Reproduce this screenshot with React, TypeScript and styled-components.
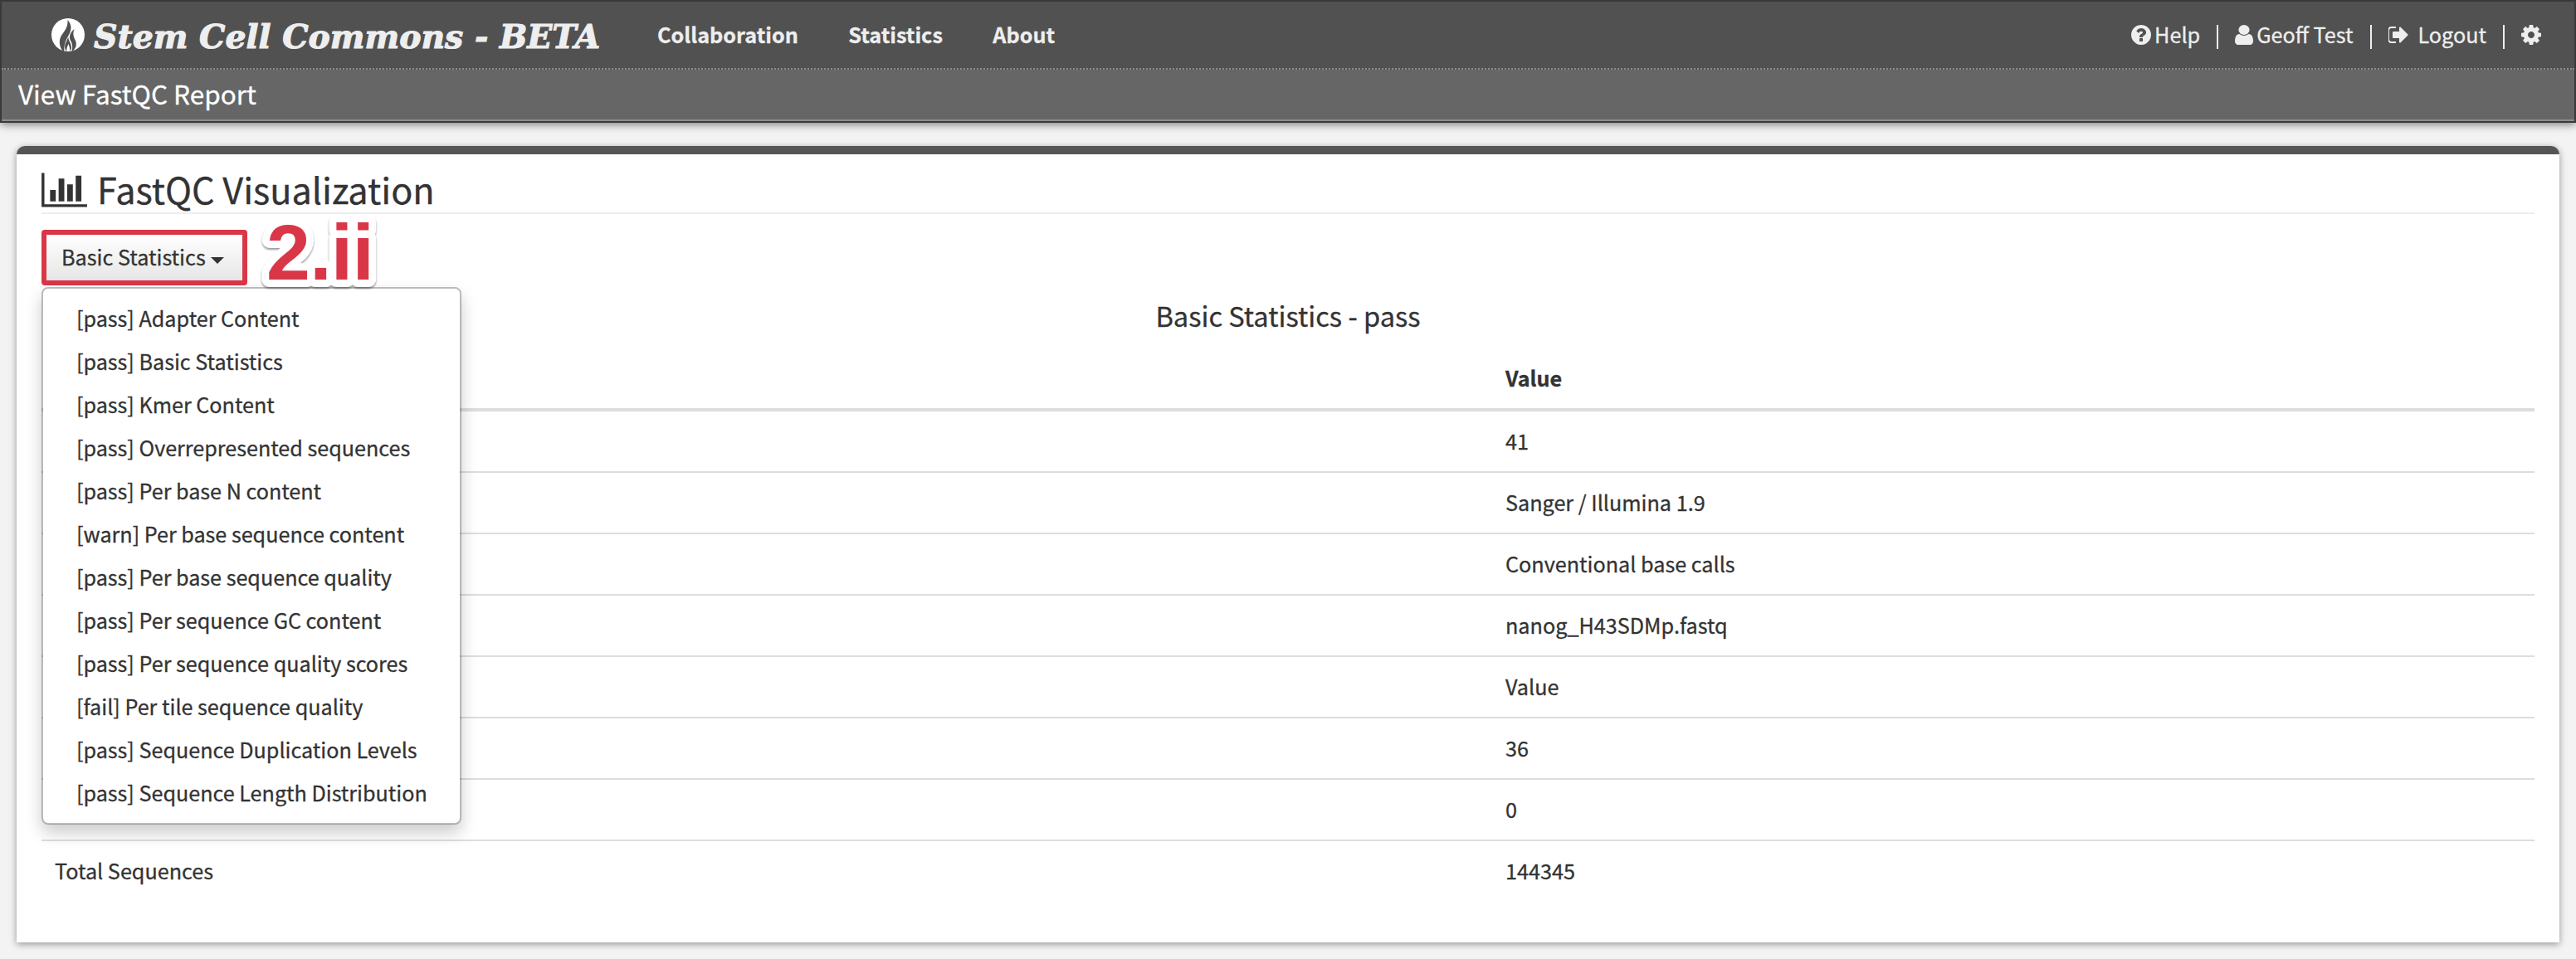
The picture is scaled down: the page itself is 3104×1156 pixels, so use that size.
import React from "react";
import styled, { createGlobalStyle } from "styled-components";

const GlobalStyle = createGlobalStyle`
  *, *::before, *::after { box-sizing: border-box; }
  body {
    margin: 0;
    background: #f3f3f3;
    color: #333;
    font-family: "Noto Sans CJK SC", "Noto Sans", sans-serif;
    font-size: 25.2px;
    line-height: 40px;
    -webkit-text-stroke: 0.3px;
  }
`;

const Page = styled.div`
  width: 3104px;
  height: 1156px;
  overflow: hidden;
`;

const Header = styled.header`
  height: 148px;
  border: 2px solid #393939;
  background: #666;
  box-shadow: 0 2px 10px rgba(0, 0, 0, 0.5);
`;

const NavBar = styled.nav`
  display: flex;
  align-items: center;
  height: 82px;
  padding: 0 40px 0 60px;
  background: #515151;
  border-bottom: 2px dotted #8c8c8c;
  color: #eee;
`;

const Brand = styled.a`
  display: flex;
  align-items: center;
  width: 730px;
`;

const BrandName = styled.span`
  margin-left: 11px;
  padding-top: 4px;
  font: italic bold 39.4px/40px "DejaVu Serif", serif;
  white-space: nowrap;
  -webkit-text-stroke: 1.1px #eee;
`;

const NavLinks = styled.div`
  display: flex;
  gap: 60.5px;
  flex: 1;
  padding-bottom: 2px;
  font-size: 25.2px;
  font-weight: 700;
`;

const UserLinks = styled.div`
  display: flex;
  align-items: center;
`;

const UserLink = styled.a<{ $gap?: number }>`
  display: flex;
  align-items: center;
  gap: ${(p) => p.$gap ?? 4}px;
`;

const LinkText = styled.span`
  padding-bottom: 2px;
`;

const Separator = styled.span`
  width: 2px;
  height: 29px;
  margin: 5px 20px 0;
  background: #eee;
`;

const TitleBar = styled.div`
  height: 62px;
  padding: 6px 20px 0;
  border-bottom: 2px solid #8c8c8c;
  color: #fff;
  font-size: 31.5px;
  line-height: 44px;
`;

const Card = styled.main`
  height: 960px;
  margin: 28px 20px 0;
  padding: 18px 30px 0;
  border-top: 10px solid #555;
  border-radius: 10px 10px 0 0;
  background: #fff;
  box-shadow: 0 2px 8px rgba(0, 0, 0, 0.4);
`;

const Heading = styled.h1`
  display: flex;
  height: 54px;
  margin: 0;
  border-bottom: 2px solid #eee;
  font-size: 43.2px;
  font-weight: 400;
  line-height: 47px;
  gap: 12px;
`;

const ChartIcon = styled.svg`
  margin-top: 1px;
`;

const Toolbar = styled.div`
  display: flex;
  position: relative;
  height: 86px;
  padding-top: 19px;
`;

const DropdownButton = styled.button`
  display: flex;
  align-items: center;
  gap: 6px;
  width: 248px;
  height: 67px;
  padding: 0 0 3px 18px;
  border: 6px solid #d93747;
  border-radius: 4px;
  background: linear-gradient(#fff, #e6e6e6);
  color: #333;
  font: inherit;
`;

const Caret = styled.span`
  margin-top: 9px;
  border: 8px solid transparent;
  border-top-color: #333;
  border-bottom: 0;
`;

const Menu = styled.ul`
  position: absolute;
  top: 88px;
  left: 0;
  width: 506px;
  height: 648px;
  margin: 0;
  padding: 9px 0;
  list-style: none;
  background: #fff;
  background-clip: padding-box;
  border: 2px solid rgba(0, 0, 0, 0.25);
  border-radius: 8px;
  box-shadow: 0 10px 20px rgba(0, 0, 0, 0.2);
  font-size: 25.15px;
`;

const MenuItem = styled.li`
  padding: 6px 40px;
  white-space: nowrap;
`;

const Callout = styled.svg`
  position: absolute;
  top: 0;
  left: 250px;
  z-index: 1;
  overflow: visible;
  filter: drop-shadow(0 2px 1px rgba(0, 0, 0, 0.4));
`;

const CalloutText = styled.text`
  font: bold 95px "Liberation Sans", sans-serif;
  letter-spacing: -0.7px;
  fill: #d93747;
  stroke: #fff;
  stroke-width: 18px;
  stroke-linejoin: round;
  paint-order: stroke;
  -webkit-text-stroke: 18px #fff;
`;

const SectionTitle = styled.h2`
  margin: 0;
  height: 76px;
  padding-top: 14px;
  font-size: 32.6px;
  font-weight: 400;
  line-height: 44px;
  text-align: center;
`;

const Table = styled.div`
  display: flex;
  flex-direction: column;
`;

const Row = styled.div<{ $head?: boolean }>`
  display: grid;
  grid-template-columns: 1748px 1fr;
  height: ${(p) => (p.$head ? 76 : 74)}px;
  padding-top: 15px;
  border-bottom: ${(p) => (p.$head ? "4px" : "2px")} solid #ddd;
  font-weight: ${(p) => (p.$head ? 700 : 400)};
  &:last-child { border-bottom: 0; }
`;

const Cell = styled.div`
  padding: 0 16px;
`;

const Glyph = ({ d, x = 128, span = 1536, width = 24 }: { d: string; x?: number; span?: number; width?: number }) => (
  <svg width={width} height="28" viewBox={`${x} 0 ${span} 1792`} preserveAspectRatio="none" fill="#eee">
    <path d={d} />
  </svg>
);

const HELP =
  "M1024 1376v-192q0-14-9-23t-23-9h-192q-14 0-23 9t-9 23v192q0 14 9 23t23 9h192q14 0 23-9t9-23zm256-672q0-88-55.5-163t-138.5-116-170-41q-243 0-371 213-15 24 8 42l132 100q7 6 19 6 16 0 25-12 53-68 86-92 34-24 86-24 48 0 85.5 26t37.5 59q0 38-20 61t-68 45q-63 28-115.5 86.5t-52.5 125.5v36q0 14 9 23t23 9h192q14 0 23-9t9-23q0-19 21.5-49.5t54.5-49.5q32-18 49-28.5t46-35 44.5-48 28-60.5 12.5-81zm384 192q0 209-103 385.5t-279.5 279.5-385.5 103-385.5-103-279.5-279.5-103-385.5 103-385.5 279.5-279.5 385.5-103 385.5 103 279.5 279.5 103 385.5z";
const USER =
  "M1536 1399q0 109-62.5 187t-150.5 78h-854q-88 0-150.5-78t-62.5-187q0-85 8.5-160.5t31.5-152 58.5-131 94-89 134.5-34.5q131 128 313 128t313-128q76 0 134.5 34.5t94 89 58.5 131 31.5 152 8.5 160.5zm-256-887q0 159-112.5 271.5t-271.5 112.5-271.5-112.5-112.5-271.5 112.5-271.5 271.5-112.5 271.5 112.5 112.5 271.5z";
const LOGOUT =
  "M704 1440q0 4 1 20t.5 26.5-3 23.5-10 19.5-20.5 6.5h-320q-119 0-203.5-84.5t-84.5-203.5v-704q0-119 84.5-203.5t203.5-84.5h320q13 0 22.5 9.5t9.5 22.5q0 4 1 20t.5 26.5-3 23.5-10 19.5-20.5 6.5h-320q-66 0-113 47t-47 113v704q0 66 47 113t113 47h312l11.5 1 11.5 3 8 5.5 7 9 2 13.5zm928-544q0 26-19 45l-544 544q-19 19-45 19t-45-19-19-45v-288h-448q-26 0-45-19t-19-45v-384q0-26 19-45t45-19h448v-288q0-26 19-45t45-19 45 19l544 544q19 19 19 45z";
const COG =
  "M1152 896q0-106-75-181t-181-75-181 75-75 181 75 181 181 75 181-75 75-181zm512-109v222q0 12-8 23t-20 13l-185 28q-19 54-39 91 35 50 107 138 10 12 10 25t-9 23q-27 37-99 108t-94 71q-12 0-26-9l-138-108q-44 23-91 38-16 136-29 186-7 28-36 28h-222q-14 0-24.5-8.5t-11.5-21.5l-28-184q-49-16-90-37l-141 107q-10 9-25 9-14 0-25-11-126-114-165-168-7-10-7-23 0-12 8-23 15-21 51-66.5t54-70.5q-27-50-41-99l-183-27q-13-2-21-12.5t-8-23.5v-222q0-12 8-23t19-13l186-28q14-46 39-92-40-57-107-138-10-12-10-24 0-10 9-23 26-36 98.5-107.5t94.5-71.5q13 0 26 10l138 107q44-23 91-38 16-136 29-186 7-28 36-28h222q14 0 24.5 8.5t11.5 21.5l28 184q49 16 90 37l142-107q9-9 24-9 13 0 25 10 129 119 165 170 7 8 7 22 0 12-8 23-15 21-51 66.5t-54 70.5q26 50 41 98l183 28q13 2 21 12.5t8 23.5z";

const modules = [
  "[pass] Adapter Content",
  "[pass] Basic Statistics",
  "[pass] Kmer Content",
  "[pass] Overrepresented sequences",
  "[pass] Per base N content",
  "[warn] Per base sequence content",
  "[pass] Per base sequence quality",
  "[pass] Per sequence GC content",
  "[pass] Per sequence quality scores",
  "[fail] Per tile sequence quality",
  "[pass] Sequence Duplication Levels",
  "[pass] Sequence Length Distribution",
];

const rows = [
  ["", "41"],
  ["", "Sanger / Illumina 1.9"],
  ["", "Conventional base calls"],
  ["", "nanog_H43SDMp.fastq"],
  ["", "Value"],
  ["", "36"],
  ["", "0"],
  ["Total Sequences", "144345"],
];

const FlameLogo = () => (
  <svg width="40" height="40" viewBox="0 0 40 40">
    <circle cx="20" cy="20" r="20" fill="#fff" />
    <g fill="#515151">
      <path d="M19.5 2C24 7 24.5 12 22 18C19 24.5 15 28 15.3 40L14 40C9 34 8.5 26 12.5 20C16 15 20 11 19.5 2Z" />
      <path d="M27.5 13C25.5 18 26.5 22 28.5 26C31 31 30 36 25 40L24.5 40C26 34 25 30 22.5 26C21 22 22.5 17 27.5 13Z" />
      <path d="M20.3 22.5C20 27 25 31 23.8 37L22.5 40L21.8 35L20.5 31L18.8 35L18 40C15 36 16 31 18 28Z" />
    </g>
  </svg>
);

export default function App() {
  return (
    <Page>
      <GlobalStyle />
      <Header>
        <NavBar>
          <Brand>
            <FlameLogo />
            <BrandName>Stem Cell Commons - BETA</BrandName>
          </Brand>
          <NavLinks>
            <a>Collaboration</a>
            <a>Statistics</a>
            <a>About</a>
          </NavLinks>
          <UserLinks>
            <UserLink><Glyph d={HELP} /><LinkText>Help</LinkText></UserLink>
            <Separator />
            <UserLink><Glyph d={USER} x={256} span={1280} width={22} /><LinkText>Geoff Test</LinkText></UserLink>
            <Separator />
            <UserLink $gap={12}><Glyph d={LOGOUT} /><LinkText>Logout</LinkText></UserLink>
            <Separator />
            <UserLink><Glyph d={COG} /></UserLink>
          </UserLinks>
        </NavBar>
        <TitleBar>View FastQC Report</TitleBar>
      </Header>
      <Card>
        <Heading>
          <ChartIcon width="55" height="48" viewBox="0 0 2048 1792" fill="#333">
            <path d="M640 896v512H384V896h256zm384-512v1024H768V384h256zm1024 1152v128H0V128h128v1408h1920zm-640-896v768h-256V640h256zm384-384v1152h-256V256h256z" />
          </ChartIcon>
          FastQC Visualization
        </Heading>
        <Toolbar>
          <DropdownButton>Basic Statistics<Caret /></DropdownButton>
          <Callout width="160" height="86">
            <CalloutText x="21" y="79">2.ii</CalloutText>
          </Callout>
          <Menu>
            {modules.map((m) => <MenuItem key={m}>{m}</MenuItem>)}
          </Menu>
        </Toolbar>
        <SectionTitle>Basic Statistics - pass</SectionTitle>
        <Table>
          <Row $head><Cell /><Cell>Value</Cell></Row>
          {rows.map(([label, value]) => (
            <Row key={value}><Cell>{label}</Cell><Cell>{value}</Cell></Row>
          ))}
        </Table>
      </Card>
    </Page>
  );
}
